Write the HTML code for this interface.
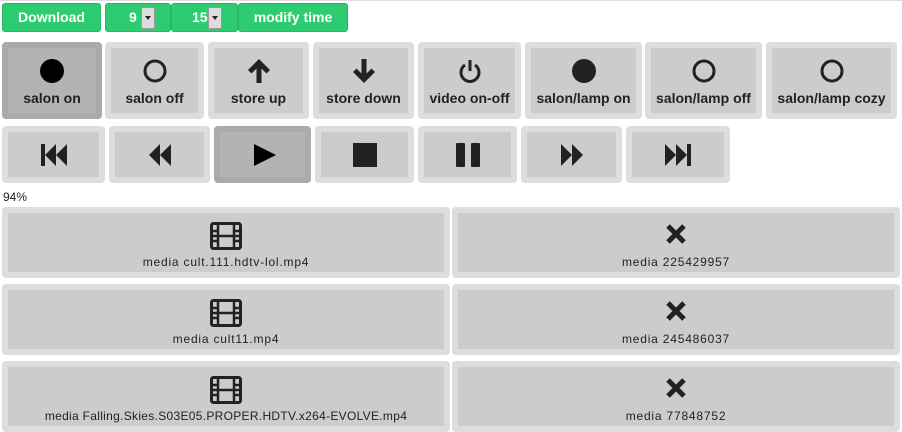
<!DOCTYPE html><html><head><style>
body{margin:0;width:902px;height:417px;overflow:hidden;background:#fff;font-family:"Liberation Sans",sans-serif;position:relative}
.topline{position:absolute;left:0;top:0;width:902px;height:1px;background:#ddd}
.g{position:absolute;top:3px;height:29px;background:#2ecc71;border:1px solid #27b864;border-radius:3px;box-sizing:border-box;color:#fff;font-weight:bold;font-size:14px;line-height:27px;text-align:center}
.sel{position:absolute;top:3px;width:14px;height:22px;background:#ddd;border:1px solid #999;box-sizing:border-box}
.sel:after{content:"";position:absolute;left:3px;top:8px;border-left:3px solid transparent;border-right:3px solid transparent;border-top:4px solid #222}
.b{position:absolute;background:#ccc;border:6px solid #ddd;border-radius:4px;box-sizing:border-box;text-align:center;color:#222;font-weight:bold;font-size:14px}
.b.a{background:#b3b3b3;border-color:#aaa}
.b svg{position:absolute;left:50%;transform:translateX(-50%)}
.r1 svg{top:10px}
.r1 span{position:absolute;left:0;right:0;top:42px;white-space:nowrap}
.r2 svg{top:11px}
.m{position:absolute;background:#ccc;border:6px solid #ddd;border-radius:4px;box-sizing:border-box;text-align:center;color:#222;font-size:12px}
.m svg{position:absolute;left:50%;transform:translateX(-50%);top:9px}
.m span{position:absolute;left:0;right:0;top:42px;white-space:nowrap;letter-spacing:0.8px}
</style></head><body>
<div class="topline"></div>
<div class="g" style="left:2px;width:99px">Download</div>
<div class="g" style="left:105px;width:66px;text-align:left;padding-left:23px">9</div><div class="sel" style="left:141px;top:7px"></div>
<div class="g" style="left:171px;width:67px;text-align:left;padding-left:20px">15</div><div class="sel" style="left:208px;top:7px"></div>
<div class="g" style="left:238px;width:110px">modify time</div>

<div class="b r1 a" style="left:2px;top:42px;width:100px;height:77px"><svg width="26" height="26"><circle cx="13" cy="13" r="12" fill="#000"/></svg><span>salon on</span></div>
<div class="b r1" style="left:105px;top:42px;width:99px;height:77px"><svg width="26" height="26"><circle cx="13" cy="13" r="10" fill="none" stroke="#222" stroke-width="3"/></svg><span>salon off</span></div>
<div class="b r1" style="left:208px;top:42px;width:101px;height:77px"><svg width="26" height="26"><path d="M13 1L2 12l3.5 3.5 5-5V25h5V10.5l5 5L24 12z" fill="#222"/></svg><span>store up</span></div>
<div class="b r1" style="left:313px;top:42px;width:101px;height:77px"><svg width="26" height="26"><path d="M13 25L2 14l3.5-3.5 5 5V1h5v14.5l5-5L24 14z" fill="#222"/></svg><span>store down</span></div>
<div class="b r1" style="left:418px;top:42px;width:103px;height:77px"><svg width="26" height="26"><path d="M8 7a9 9 0 1 0 10 0" fill="none" stroke="#222" stroke-width="3"/><rect x="11.5" y="2" width="3" height="11" fill="#222"/></svg><span>video on-off</span></div>
<div class="b r1" style="left:525px;top:42px;width:117px;height:77px"><svg width="26" height="26"><circle cx="13" cy="13" r="12" fill="#222"/></svg><span>salon/lamp on</span></div>
<div class="b r1" style="left:645px;top:42px;width:117px;height:77px"><svg width="26" height="26"><circle cx="13" cy="13" r="10" fill="none" stroke="#222" stroke-width="3"/></svg><span>salon/lamp off</span></div>
<div class="b r1" style="left:766px;top:42px;width:131px;height:77px"><svg width="26" height="26"><circle cx="13" cy="13" r="10" fill="none" stroke="#222" stroke-width="3"/></svg><span>salon/lamp cozy</span></div>

<div class="b r2" style="left:2px;top:126px;width:103px;height:57px"><svg width="30" height="24"><rect x="2" y="1" width="4" height="22" fill="#222"/><path d="M17 1L6 12l11 11zM28 1L17 12l11 11z" fill="#222"/></svg></div>
<div class="b r2" style="left:109px;top:126px;width:101px;height:57px"><svg width="26" height="24"><path d="M13 1L2 12l11 11zM24 1L13 12l11 11z" fill="#222"/></svg></div>
<div class="b r2 a" style="left:214px;top:126px;width:97px;height:57px"><svg width="26" height="24"><path d="M4 1l22 11L4 23z" fill="#000"/></svg></div>
<div class="b r2" style="left:315px;top:126px;width:99px;height:57px"><svg width="26" height="24"><rect x="1" y="0" width="24" height="24" fill="#222"/></svg></div>
<div class="b r2" style="left:418px;top:126px;width:99px;height:57px"><svg width="26" height="24"><rect x="1" y="0" width="9" height="24" rx="1" fill="#222"/><rect x="16" y="0" width="9" height="24" rx="1" fill="#222"/></svg></div>
<div class="b r2" style="left:521px;top:126px;width:101px;height:57px"><svg width="26" height="24"><path d="M2 1l11 11L2 23zM13 1l11 11-11 11z" fill="#222"/></svg></div>
<div class="b r2" style="left:626px;top:126px;width:104px;height:57px"><svg width="30" height="24"><path d="M2 1l11 11L2 23zM13 1l11 11-11 11z" fill="#222"/><rect x="24" y="1" width="4" height="22" fill="#222"/></svg></div>

<div style="position:absolute;left:3px;top:190px;font-size:12px;color:#222">94%</div>

<div class="m" style="left:2px;top:207px;width:448px;height:71px"><svg width="32" height="28"><rect x="1.5" y="1.5" width="29" height="25" rx="2" fill="none" stroke="#222" stroke-width="3"/><path d="M8 2v24M24 2v24M2 9h6M2 14h6M2 19h6M24 9h6M24 14h6M24 19h6M8 14h16" stroke="#222" stroke-width="2.5"/></svg><span>media cult.111.hdtv-lol.mp4</span></div>
<div class="m" style="left:452px;top:207px;width:448px;height:71px"><svg width="24" height="24"><path d="M4 4l16 16M20 4L4 20" stroke="#222" stroke-width="5"/></svg><span>media 225429957</span></div>
<div class="m" style="left:2px;top:284px;width:448px;height:71px"><svg width="32" height="28"><rect x="1.5" y="1.5" width="29" height="25" rx="2" fill="none" stroke="#222" stroke-width="3"/><path d="M8 2v24M24 2v24M2 9h6M2 14h6M2 19h6M24 9h6M24 14h6M24 19h6M8 14h16" stroke="#222" stroke-width="2.5"/></svg><span>media cult11.mp4</span></div>
<div class="m" style="left:452px;top:284px;width:448px;height:71px"><svg width="24" height="24"><path d="M4 4l16 16M20 4L4 20" stroke="#222" stroke-width="5"/></svg><span>media 245486037</span></div>
<div class="m" style="left:2px;top:361px;width:448px;height:71px"><svg width="32" height="28"><rect x="1.5" y="1.5" width="29" height="25" rx="2" fill="none" stroke="#222" stroke-width="3"/><path d="M8 2v24M24 2v24M2 9h6M2 14h6M2 19h6M24 9h6M24 14h6M24 19h6M8 14h16" stroke="#222" stroke-width="2.5"/></svg><span style="letter-spacing:0.3px">media Falling.Skies.S03E05.PROPER.HDTV.x264-EVOLVE.mp4</span></div>
<div class="m" style="left:452px;top:361px;width:448px;height:71px"><svg width="24" height="24"><path d="M4 4l16 16M20 4L4 20" stroke="#222" stroke-width="5"/></svg><span>media 77848752</span></div>
</body></html>
